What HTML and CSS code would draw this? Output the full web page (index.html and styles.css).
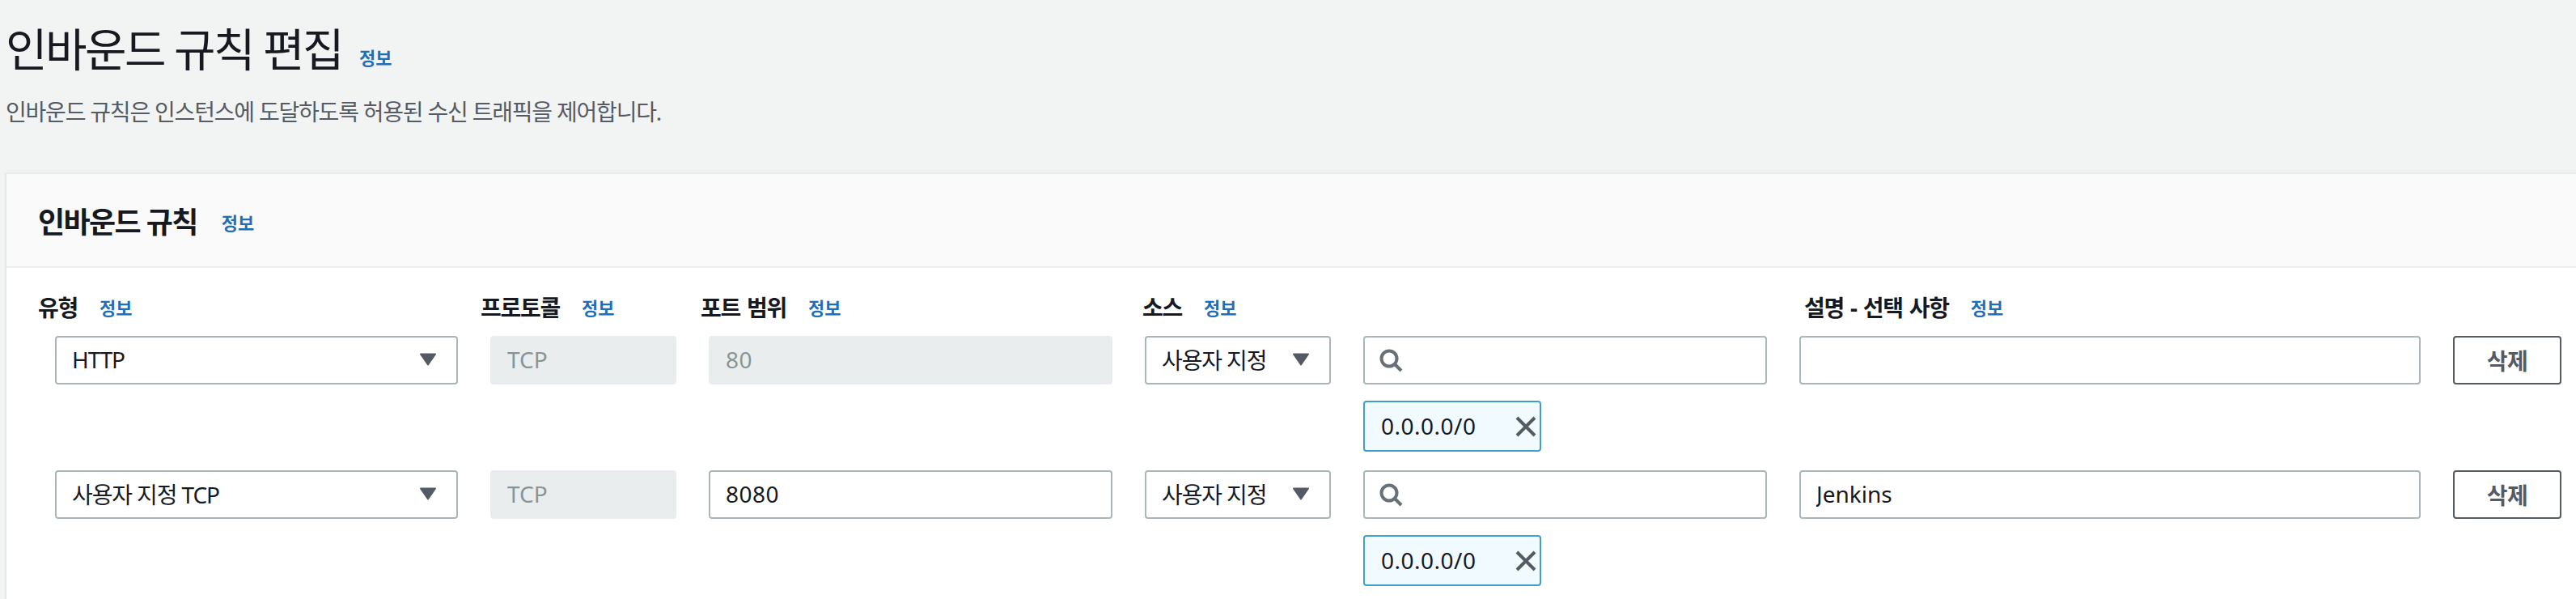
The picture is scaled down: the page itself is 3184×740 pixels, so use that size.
FILE: index.html
```html
<!DOCTYPE html>
<html lang="ko">
<head>
    <meta charset="UTF-8">
    <title>인바운드 규칙 편집</title>
    <link rel="stylesheet" href="styles.css">
</head>
<body>
    <div class="page-header">
        <div class="page-title">
            <h1>인바운드 규칙 편집</h1>
            <a class="info" href="#">정보</a>
        </div>
        <p class="page-desc">인바운드 규칙은 인스턴스에 도달하도록 허용된 수신 트래픽을 제어합니다.</p>
    </div>

    <div class="card">
        <div class="card-header">
            <h2>인바운드 규칙</h2>
            <a class="info" href="#">정보</a>
        </div>
        <div class="card-body">
            <div class="label-row">
                <div class="label label-type"><b>유형</b><a class="info" href="#">정보</a></div>
                <div class="label label-protocol"><b>프로토콜</b><a class="info" href="#">정보</a></div>
                <div class="label label-port"><b>포트 범위</b><a class="info" href="#">정보</a></div>
                <div class="label label-source"><b>소스</b><a class="info" href="#">정보</a></div>
                <div class="label"><b>설명 - 선택 사항</b><a class="info" href="#">정보</a></div>
            </div>

            <div class="rule-row">
                <div class="field select">
                    <span class="select-text">HTTP</span>
                    <svg class="caret" viewBox="0 0 22 16"><path d="M2 1.5h18L11 14.5z" fill="#545b64" stroke="#545b64" stroke-width="2" stroke-linejoin="round"/></svg>
                </div>
                <input class="field disabled" type="text" value="TCP" disabled>
                <input class="field disabled num" type="text" value="80" disabled>
                <div class="field select">
                    <span class="select-text">사용자 지정</span>
                    <svg class="caret" viewBox="0 0 22 16"><path d="M2 1.5h18L11 14.5z" fill="#545b64" stroke="#545b64" stroke-width="2" stroke-linejoin="round"/></svg>
                </div>
                <div class="source-cell">
                    <div class="search">
                        <svg class="search-icon" viewBox="0 0 30 30"><circle cx="12" cy="12" r="9.5" fill="none" stroke="#687078" stroke-width="4"/><path d="M19 19l8 8" stroke="#687078" stroke-width="4" fill="none"/></svg>
                        <input class="field" type="text">
                    </div>
                    <div class="chip">
                        <span class="num">0.0.0.0/0</span>
                        <svg class="chip-x" viewBox="0 0 26 26"><path d="M2 2l22 22M24 2L2 24" stroke="#545b64" stroke-width="4" fill="none"/></svg>
                    </div>
                </div>
                <input class="field" type="text">
                <button class="delete">삭제</button>
            </div>

            <div class="rule-row">
                <div class="field select">
                    <span class="select-text">사용자 지정 TCP</span>
                    <svg class="caret" viewBox="0 0 22 16"><path d="M2 1.5h18L11 14.5z" fill="#545b64" stroke="#545b64" stroke-width="2" stroke-linejoin="round"/></svg>
                </div>
                <input class="field disabled" type="text" value="TCP" disabled>
                <input class="field num" type="text" value="8080">
                <div class="field select">
                    <span class="select-text">사용자 지정</span>
                    <svg class="caret" viewBox="0 0 22 16"><path d="M2 1.5h18L11 14.5z" fill="#545b64" stroke="#545b64" stroke-width="2" stroke-linejoin="round"/></svg>
                </div>
                <div class="source-cell">
                    <div class="search">
                        <svg class="search-icon" viewBox="0 0 30 30"><circle cx="12" cy="12" r="9.5" fill="none" stroke="#687078" stroke-width="4"/><path d="M19 19l8 8" stroke="#687078" stroke-width="4" fill="none"/></svg>
                        <input class="field" type="text">
                    </div>
                    <div class="chip">
                        <span class="num">0.0.0.0/0</span>
                        <svg class="chip-x" viewBox="0 0 26 26"><path d="M2 2l22 22M24 2L2 24" stroke="#545b64" stroke-width="4" fill="none"/></svg>
                    </div>
                </div>
                <input class="field" type="text" value="Jenkins">
                <button class="delete">삭제</button>
            </div>
        </div>
    </div>
</body>
</html>
```

FILE: styles.css
```css
* {
    box-sizing: border-box;
}
html, body {
    height: 100%;
    overflow: hidden;
}
body {
    margin: 0;
    font-family: "Noto Sans", "Noto Sans CJK KR", sans-serif;
    font-size: 28px;
    color: #16191f;
    background-color: #f2f3f3;
}
.page-header {
    height: 213px;
    padding: 28px 0 0 7px;
}
.page-title {
    display: flex;
    align-items: center;
    height: 64px;
}
.page-title h1 {
    margin: 0;
    font-size: 56px;
    font-weight: 400;
    line-height: 64px;
    letter-spacing: -0.045em;
}
.page-title .info {
    margin-left: 21px;
    padding-top: 20px;
}
.page-desc {
    margin: 26px 0 0;
    font-size: 28px;
    line-height: 40px;
    letter-spacing: -0.043em;
    color: #545b64;
}
.info {
    font-size: 22px;
    font-weight: 700;
    letter-spacing: 0;
    color: #1f6fb8;
    text-decoration: none;
}
.card {
    margin-left: 6px;
    background: white;
    border-left: 2px solid #e5e7e7;
    border-top: 2px solid #eaeded;
    height: 527px;
}
.card-header {
    display: flex;
    align-items: center;
    height: 116px;
    padding-left: 39px;
    background: #fafafa;
    border-bottom: 2px solid #eaeded;
}
.card-header h2 {
    margin: 0;
    font-size: 36px;
    font-weight: 700;
    letter-spacing: -0.045em;
}
.card-header .info {
    margin-left: 30px;
    padding-top: 4px;
}
.card-body {
    padding-top: 30px;
}
.label-row {
    display: flex;
    align-items: center;
    height: 36px;
    padding-left: 39px;
    margin-bottom: 18px;
}
.label {
    display: flex;
    align-items: center;
    flex-shrink: 0;
}
.label b {
    font-size: 28px;
    font-weight: 700;
    letter-spacing: -0.045em;
    word-spacing: 2px;
}
.label .info {
    margin-left: 27px;
}
.label-type {
    width: 547px;
}
.label-protocol {
    width: 272px;
}
.label-port {
    width: 546px;
}
.label-source {
    width: 818px;
}
.rule-row {
    display: grid;
    grid-template-columns: 498px 230px 499px 230px 499px 768px 134px;
    column-gap: 40px;
    align-items: start;
    padding-left: 60px;
    margin-bottom: 23px;
}
.field {
    display: block;
    width: 100%;
    height: 60px;
    padding: 0 19px 2px;
    border: 2px solid #aab7b8;
    border-radius: 4px;
    background: white;
    font-family: inherit;
    font-size: 28px;
    color: #16191f;
    outline: none;
}
.disabled {
    border-color: #eaeded;
    background: #eaeded;
    color: #879596;
}
.num {
    letter-spacing: 0.5px;
}
.select {
    display: flex;
    align-items: center;
    justify-content: space-between;
    padding-right: 24px;
}
.select-text {
    letter-spacing: -0.04em;
}
.caret {
    width: 22px;
    height: 16px;
}
.source-cell {
    display: flex;
    flex-direction: column;
    gap: 20px;
}
.search {
    position: relative;
}
.search .field {
    padding-left: 60px;
}
.search-icon {
    position: absolute;
    left: 20px;
    top: 16px;
    width: 30px;
    height: 30px;
}
.chip {
    display: flex;
    align-items: center;
    justify-content: space-between;
    width: 220px;
    height: 63px;
    padding: 0 4px 2px 20px;
    border: 2px solid #3f9fc8;
    border-radius: 4px;
    background: #f1faff;
}
.chip-x {
    width: 26px;
    height: 26px;
    margin-top: 2px;
}
.delete {
    height: 60px;
    padding: 0;
    border: 2px solid #545b64;
    border-radius: 4px;
    background: white;
    font-family: inherit;
    font-size: 28px;
    font-weight: 700;
    letter-spacing: -0.02em;
    color: #545b64;
    cursor: pointer;
}
```
